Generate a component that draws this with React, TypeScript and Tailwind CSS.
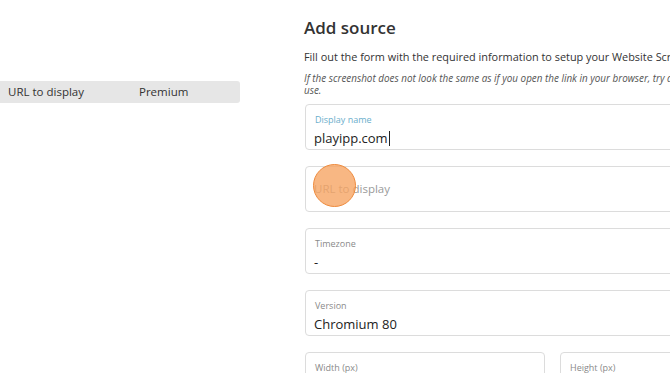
import React from 'react';

const font = { fontFamily: '"Open Sans", "Noto Sans", sans-serif' };

const Field: React.FC<{ label?: string; value?: string; placeholder?: string; labelActive?: boolean; cursor?: boolean; className?: string; children?: React.ReactNode }> = ({
  label,
  value,
  placeholder,
  labelActive,
  cursor,
  className = '',
  children,
}) => {
  return (
    <div className={`relative h-[46px] rounded-[4px] border border-[#dcdcdc] bg-white ${className}`}>
      {label && (
        <div className={`absolute left-[9px] top-[9px] text-[9px] leading-[12px] ${labelActive ? 'text-[#6aaecb]' : 'text-[#8a8a8a]'}`}>
          {label}
        </div>
      )}
      {value !== undefined && (
        <div className="absolute left-[8px] top-[24px] flex items-center text-[13px] leading-[18px] text-[#222]">
          {value}
          {cursor && <span className="ml-[1px] inline-block h-[15px] w-[1px] bg-[#222]" />}
        </div>
      )}
      {placeholder && (
        <div className="flex h-full items-center pl-[8px] text-[11.5px] text-[#9a9a9a]">{placeholder}</div>
      )}
      {children}
    </div>
  );
};

export default function App() {
  return (
    <div className="flex h-[373px] w-[670px] overflow-hidden bg-white" style={font}>
      {/* left list */}
      <div className="w-[240px] shrink-0 pt-[81px]">
        <div className="flex h-[22px] items-center rounded-r-[3px] bg-[#e6e6e6] text-[11.5px] font-medium text-[#333]">
          <span className="w-[139px] pl-[8px]">URL to display</span>
          <span>Premium</span>
        </div>
      </div>

      {/* form */}
      <div className="ml-[64px] w-[520px] shrink-0 pt-[18px]">
        <h2 className="text-[17px] font-semibold leading-[20px] text-[#333]">Add source</h2>
        <p className="mt-[11px] whitespace-nowrap text-[10.9px] leading-[16px] text-[#333]">
          Fill out the form with the required information to setup your Website Screenshot source.
        </p>
        <p className="mt-[7px] text-[9.9px] italic leading-[12px] text-[#555]">
          <span className="whitespace-nowrap">
            If the screenshot does not look the same as if you open the link in your browser, try another Chromium version or the timezone you
          </span>
          <br />
          use.
        </p>

        <div className="ml-[1px] mt-[8px] flex flex-col gap-[16px]">
          <Field label="Display name" value="playipp.com" labelActive cursor />
          <Field placeholder="URL to display">
            <div className="absolute left-[7px] top-[-3px] h-[43px] w-[43px] rounded-full border-[1.5px] border-[#ee8a3c] bg-[#f6a564]/80" />
          </Field>
          <Field label="Timezone" value="-" />
          <Field label="Version" value="Chromium 80" />
          <div className="flex gap-[15px]">
            <Field label="Width (px)" className="w-[240px]" />
            <Field label="Height (px)" className="flex-1" />
          </div>
        </div>
      </div>
    </div>
  );
}
